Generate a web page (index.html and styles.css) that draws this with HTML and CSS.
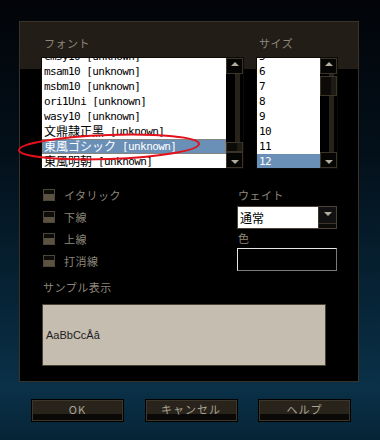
FILE: index.html
```html
<!DOCTYPE html>
<html lang="ja">
<head>
    <meta charset="UTF-8">
    <title>フォント</title>
    <link rel="stylesheet" href="styles.css">
</head>
<body>
    <div class="dialog">
        <div class="lists">
            <div class="col font-col">
                <div class="label">フォント</div>
                <div class="listbox">
                    <ul class="items">
                        <li>cmsy10 [unknown]</li>
                        <li>msam10 [unknown]</li>
                        <li>msbm10 [unknown]</li>
                        <li>ori1Uni [unknown]</li>
                        <li>wasy10 [unknown]</li>
                        <li><span class="jp">文鼎隷正黑</span> [unknown]</li>
                        <li class="selected focus"><span class="jp">東風ゴシック</span> [unknown]</li>
                        <li><span class="jp">東風明朝</span> [unknown]</li>
                    </ul>
                    <div class="scrollbar">
                        <div class="sb-btn"><span class="arrow-up"></span></div>
                        <div class="sb-track"><div class="sb-thumb thumb-bottom"></div></div>
                        <div class="sb-btn"><span class="arrow-down"></span></div>
                    </div>
                </div>
            </div>
            <div class="col size-col">
                <div class="label">サイズ</div>
                <div class="listbox">
                    <ul class="items">
                        <li>5</li>
                        <li>6</li>
                        <li>7</li>
                        <li>8</li>
                        <li>9</li>
                        <li>10</li>
                        <li>11</li>
                        <li class="selected">12</li>
                    </ul>
                    <div class="scrollbar">
                        <div class="sb-btn"><span class="arrow-up"></span></div>
                        <div class="sb-track"><div class="sb-thumb thumb-top"></div></div>
                        <div class="sb-btn"><span class="arrow-down"></span></div>
                    </div>
                </div>
            </div>
        </div>

        <div class="options">
            <div class="checks">
                <div class="check"><span class="box"></span>イタリック</div>
                <div class="check"><span class="box"></span>下線</div>
                <div class="check"><span class="box"></span>上線</div>
                <div class="check"><span class="box"></span>打消線</div>
            </div>
            <div class="props">
                <div class="label prop-label">ウェイト</div>
                <div class="select">
                    <span class="select-value">通常</span>
                    <span class="select-btn"><span class="arrow-down"></span></span>
                </div>
                <div class="label prop-label small">色</div>
                <div class="color-box"></div>
            </div>
        </div>

        <div class="label sample-label">サンプル表示</div>
        <div class="sample">AaBbCcÅâ</div>

        <!-- annotation drawn over the list -->
        <svg class="mark" width="200" height="40" viewBox="0 0 200 40">
            <ellipse cx="92" cy="19" rx="90" ry="12" fill="none" stroke="#e3101b" stroke-width="2" transform="rotate(-2 92 19)"/>
        </svg>
    </div>

    <div class="buttons">
        <button class="btn">OK</button>
        <button class="btn">キャンセル</button>
        <button class="btn">ヘルプ</button>
    </div>
</body>
</html>
```

FILE: styles.css
```css
body {
    margin: 0;
    width: 380px;
    height: 440px;
    overflow: hidden;
    background: linear-gradient(#020408 0%, #03101a 35%, #072538 70%, #0a3148 88%, #072436 100%);
    font-family: "Noto Sans CJK JP", "DejaVu Sans", sans-serif;
    font-size: 11px;
    color: #8c877b;
}

.dialog {
    position: relative;
    margin: 21px 0 0 19px;
    width: 340px;
    border: 1px solid #3a3427;
    background: linear-gradient(#221e17 0 47px, #000 47px);
    padding: 14px 22px 15px 21px;
    box-sizing: border-box;
}

.label {
    line-height: 15px;
    height: 15px;
    padding-left: 3px;
    letter-spacing: 0.5px;
}

.lists {
    display: flex;
    gap: 12px;
}

.col .label {
    margin-bottom: 6px;
}

.listbox {
    display: flex;
    height: 112px;
    border: 1px solid #0b0a07;
    box-sizing: border-box;
}

.font-col .listbox {
    width: 203px;
}

.size-col .listbox {
    width: 82px;
}

.items {
    flex: 1;
    margin: 0;
    padding: 0;
    list-style: none;
    background: #fff;
    overflow: hidden;
    color: #000;
    font-family: "DejaVu Sans Mono", "Noto Sans CJK JP", monospace;
    font-size: 11px;
    letter-spacing: -0.6px;
}

.items li {
    height: 15px;
    line-height: 15px;
    padding-left: 2px;
    white-space: nowrap;
}

.items li:first-child {
    margin-top: -9px;
}

.items .jp {
    font-family: "Noto Sans CJK JP", sans-serif;
    font-size: 12px;
    line-height: 10px;
    letter-spacing: 0;
    vertical-align: -1px;
}

.items .selected {
    background: #6b90b7;
    color: #fff;
}

.items .focus {
    outline: 1px dotted #a07a48;
    outline-offset: -1px;
}

.scrollbar {
    width: 17px;
    display: flex;
    flex-direction: column;
    background: #000;
}

.sb-btn {
    height: 16px;
    border: 1px solid #3b3529;
    box-sizing: border-box;
    background: #050504;
    display: flex;
    justify-content: center;
    align-items: center;
}

.arrow-up {
    width: 0;
    height: 0;
    border-left: 4px solid transparent;
    border-right: 4px solid transparent;
    border-bottom: 4px solid #b3ad9e;
    margin-top: -4px;
}

.arrow-down {
    width: 0;
    height: 0;
    border-left: 4px solid transparent;
    border-right: 4px solid transparent;
    border-top: 4px solid #b3ad9e;
    margin-bottom: -3px;
}

.sb-track {
    flex: 1;
    display: flex;
    flex-direction: column;
    background: linear-gradient(to right, #000 0 9px, #27231a 9px 14px, #000 14px);
}

.sb-thumb {
    border: 1px solid #3b3529;
    background: linear-gradient(to right, #0c0b08 0 10px, #1e1b14 10px);
}

.thumb-bottom {
    margin-top: auto;
    height: 8px;
}

.thumb-top {
    margin-top: 2px;
    height: 18px;
}

.options {
    display: grid;
    grid-template-columns: 196px 100px;
    margin-top: 15px;
}

.check {
    display: flex;
    align-items: center;
    height: 22px;
    letter-spacing: 0.5px;
}

.box {
    width: 12px;
    height: 12px;
    margin: 0 9px 0 2px;
    box-sizing: border-box;
    border: 1px solid #4d4739;
    background: linear-gradient(#0d0c09 0 45%, #5b5242 45%);
}

.prop-label {
    height: 22px;
    line-height: 22px;
    padding-left: 1px;
}

.prop-label.small {
    height: 19px;
    line-height: 19px;
}

.select {
    display: flex;
    height: 23px;
    border: 1px solid #4a4436;
    box-sizing: border-box;
    background: #000;
}

.select-value {
    flex: 1;
    background: #fff;
    color: #000;
    font-size: 12px;
    line-height: 21px;
    padding-left: 2px;
}

.select-btn {
    width: 18px;
    border-left: 1px solid #3b3529;
    display: flex;
    justify-content: center;
    padding-top: 5px;
    box-sizing: border-box;
    background: linear-gradient(#111 0 16px, #3b3529 16px 17px, #0c0b08 17px);
}

.color-box {
    height: 23px;
    box-sizing: border-box;
    border: 1px solid #7a7a7a;
    border-top-color: #e6e6e6;
    border-left-color: #e6e6e6;
    background: #000;
}

.sample-label {
    margin-top: 8px;
    margin-bottom: 9px;
    padding-left: 2px;
}

.sample {
    width: 284px;
    height: 62px;
    margin-left: 1px;
    box-sizing: border-box;
    border: 1px solid #4a4232;
    background: #c5bdb0;
    color: #1c1c1c;
    font-family: "Liberation Sans", sans-serif;
    font-size: 11px;
    line-height: 60px;
    padding-left: 3px;
}

.mark {
    position: absolute;
    left: -3px;
    top: 106px;
}

.buttons {
    display: flex;
    justify-content: space-between;
    width: 320px;
    margin: 17px 0 0 31px;
}

.btn {
    width: 93px;
    height: 23px;
    border: 1px solid #000;
    box-shadow: inset 0 0 0 1px #3d3729;
    background: linear-gradient(#29241b 0 68%, #0a0907 68%);
    color: #a9a396;
    font-family: "Noto Sans CJK JP", sans-serif;
    font-size: 11px;
    letter-spacing: 1px;
    padding: 0 0 3px;
}
```
